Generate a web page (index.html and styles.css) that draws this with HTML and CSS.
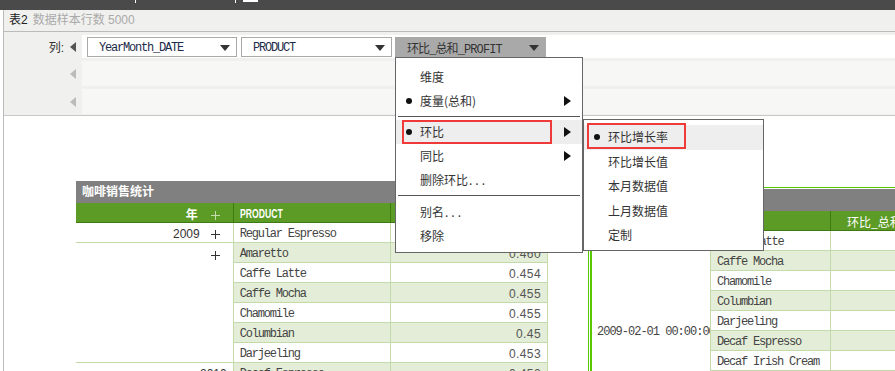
FILE: index.html
```html
<!DOCTYPE html>
<html>
<head>
    <link rel="stylesheet" href="styles.css">
</head>
<body>
    <div class="topbar">
        <span class="tab"></span>
        <span class="tab"></span>
        <span class="tab tab-on"></span>
    </div>
    <div class="panel">
        <div class="head">
            <span class="name">表2</span><span class="count">数据样本行数 5000</span>
        </div>
        <div class="toolbar">
            <div class="shelf">
                <div class="shelf-label"><span>列:</span><i class="arrow-left"></i></div>
                <div class="shelf-body shelf-fields">
                    <div class="field">YearMonth_DATE<i class="caret"></i></div>
                    <div class="field field-wide">PRODUCT<i class="caret"></i></div>
                    <div class="field field-wide field-open">环比_总和_PROFIT<i class="caret"></i></div>
                </div>
            </div>
            <div class="shelf">
                <div class="shelf-label"><i class="arrow-left arrow-dim"></i></div>
                <div class="shelf-body"></div>
            </div>
            <div class="shelf">
                <div class="shelf-label"><i class="arrow-left arrow-dim"></i></div>
                <div class="shelf-body"></div>
            </div>
        </div>
        <div class="canvas">
            <div class="report report-a">
                <div class="report-title">咖啡销售统计</div>
                <table class="grid">
                    <tr>
                        <th class="year">年<i class="plus plus-head"></i></th>
                        <th><span class="narrow">PRODUCT</span></th>
                        <th></th>
                    </tr>
                    <tr>
                        <td class="year">2009<i class="plus"></i></td>
                        <td class="prod">Regular Espresso</td>
                        <td class="val">0.452</td>
                    </tr>
                    <tr class="alt">
                        <td class="year year-top" rowspan="6"><i class="plus"></i></td>
                        <td class="prod">Amaretto</td>
                        <td class="val">0.460</td>
                    </tr>
                    <tr>
                        <td class="prod">Caffe Latte</td>
                        <td class="val">0.454</td>
                    </tr>
                    <tr class="alt">
                        <td class="prod">Caffe Mocha</td>
                        <td class="val">0.455</td>
                    </tr>
                    <tr>
                        <td class="prod">Chamomile</td>
                        <td class="val">0.455</td>
                    </tr>
                    <tr class="alt">
                        <td class="prod">Columbian</td>
                        <td class="val">0.45</td>
                    </tr>
                    <tr>
                        <td class="prod">Darjeeling</td>
                        <td class="val">0.453</td>
                    </tr>
                    <tr class="alt">
                        <td class="year year-plain">2010</td>
                        <td class="prod">Decaf Espresso</td>
                        <td class="val">0.452</td>
                    </tr>
                </table>
            </div>

            <div class="report report-b">
                <div class="report-title"></div>
                <table class="grid">
                    <tr>
                        <th></th>
                        <th><span class="narrow">PRODUCT</span></th>
                        <th class="metric">环比_总和_PROFIT</th>
                    </tr>
                    <tr>
                        <td class="stamp" rowspan="10">2009-02-01 00:00:00</td>
                        <td class="prod sel">Caffe Latte</td>
                        <td></td>
                    </tr>
                    <tr class="alt"><td class="prod sel">Caffe Mocha</td><td></td></tr>
                    <tr><td class="prod sel">Chamomile</td><td></td></tr>
                    <tr class="alt"><td class="prod sel">Columbian</td><td></td></tr>
                    <tr><td class="prod sel">Darjeeling</td><td></td></tr>
                    <tr class="alt"><td class="prod sel">Decaf Espresso</td><td></td></tr>
                    <tr><td class="prod sel">Decaf Irish Cream</td><td></td></tr>
                    <tr class="alt"><td class="prod sel">Earl Grey</td><td></td></tr>
                    <tr><td class="prod sel">Green Tea</td><td></td></tr>
                    <tr class="alt"><td class="prod sel">Lemon</td><td></td></tr>
                </table>
            </div>
        </div>
    </div>

    <div class="menu menu-main">
        <div class="menu-item">维度</div>
        <div class="menu-item checked has-sub">度量(总和)</div>
        <div class="menu-sep"></div>
        <div class="menu-item checked has-sub active">环比<span class="mark mark-main"></span></div>
        <div class="menu-item has-sub">同比</div>
        <div class="menu-item">删除环比<span class="dots">...</span></div>
        <div class="menu-sep menu-sep-low"></div>
        <div class="menu-item">别名<span class="dots">...</span></div>
        <div class="menu-item">移除</div>
    </div>

    <div class="menu menu-sub">
        <div class="menu-item checked active">环比增长率<span class="mark mark-sub"></span></div>
        <div class="menu-item">环比增长值</div>
        <div class="menu-item">本月数据值</div>
        <div class="menu-item">上月数据值</div>
        <div class="menu-item">定制</div>
    </div>
</body>
</html>
```

FILE: styles.css
```css
body {
    margin: 0;
    width: 895px;
    height: 371px;
    overflow: hidden;
    position: relative;
    background-color: #fff;
    font-family: "Liberation Sans", "Noto Sans CJK SC", sans-serif;
    font-size: 12px;
    color: #333;
}
.topbar {
    height: 10px;
    background-color: #4a4a4a;
    display: flex;
}
.tab {
    width: 99px;
    height: 3px;
    border-right: 1px solid #fff;
}
.tab:first-child {
    width: 135px;
}
.tab-on {
    width: 15px;
    margin-left: 7px;
    height: 2px;
    border: none;
    background-color: #fff;
}
.panel {
    margin-left: 3px;
    border-left: 1px solid #bbb;
    height: 361px;
}
.head {
    height: 21px;
    line-height: 21px;
    padding-left: 5px;
    background-color: #f0f0ee;
    border-bottom: 1px solid #bbb;
}
.head .name {
    color: #222;
}
.head .count {
    color: #aaa;
    margin-left: 5px;
}
.toolbar {
    background-color: #f0f0ee;
    padding: 3px 0 1px;
    border-bottom: 1px solid #c8c8c8;
}
.shelf {
    display: flex;
    height: 25px;
    margin-top: 3px;
}
.shelf:first-child {
    height: 23px;
    margin-top: 0;
}
.shelf-label {
    width: 78px;
    display: flex;
    align-items: center;
    justify-content: flex-end;
    padding-right: 6px;
    box-sizing: border-box;
    color: #333;
}
.shelf-label span {
    margin-right: 6px;
}
.arrow-left {
    width: 0;
    height: 0;
    border-top: 5px solid transparent;
    border-bottom: 5px solid transparent;
    border-right: 6px solid #555;
}
.arrow-dim {
    border-right-color: #bbb;
}
.shelf-body {
    flex: 1;
    background-color: #f7f7f5;
}
.shelf-fields {
    background-color: #fff;
    display: flex;
    padding: 2px 5px;
}
.field {
    width: 150px;
    height: 20px;
    box-sizing: border-box;
    border: 1px solid #a9a9a9;
    padding: 1px 6px 0 11px;
    display: flex;
    align-items: center;
    justify-content: space-between;
    font-family: "Liberation Mono", "Noto Sans CJK SC", monospace;
    font-size: 12px;
    letter-spacing: -1.2px;
    color: #1d2b4a;
}
.field-wide {
    width: 151px;
    margin-left: 4px;
}
.field-open {
    margin-left: 3px;
    background-color: #a9a9a9;
    color: #333;
    letter-spacing: -0.9px;
}
.caret {
    width: 0;
    height: 0;
    border-left: 5px solid transparent;
    border-right: 5px solid transparent;
    border-top: 6px solid #333;
}
.canvas {
    position: relative;
    height: 255px;
    overflow: hidden;
}
.report {
    position: absolute;
}
.report-a {
    left: 72px;
    top: 65px;
    width: 472px;
}
.report-b {
    left: 586px;
    top: 71px;
    width: 480px;
    border-top: 1px solid #5ac800;
    border-left: 2px solid #5ac800;
    padding-top: 1px;
}
.report-b::before {
    content: "";
    position: absolute;
    left: -4px;
    top: 24px;
    bottom: 0;
    width: 1px;
    background-color: #5ac800;
}
.report-title {
    height: 22px;
    line-height: 22px;
    padding-left: 6px;
    background-color: #808080;
    color: #fff;
    font-weight: bold;
}
.grid {
    width: 100%;
    border-collapse: collapse;
    table-layout: fixed;
}
.grid th, .grid td {
    height: 17px;
    padding: 2px 6px 0;
    border: 1px solid #c3dbab;
    white-space: nowrap;
    overflow: hidden;
    text-align: left;
}
.grid th {
    background-color: #5b9b26;
    border-color: #3d7a12;
    color: #fff;
    font-weight: bold;
}
.narrow {
    display: inline-block;
    transform: scaleX(0.72);
    transform-origin: left center;
}
.grid tr:first-child th {
    border-top: none;
}
.grid td:first-child, .grid th:first-child {
    border-left: none;
}
.grid .year {
    text-align: right;
    padding-right: 13px;
}
.grid .year-top {
    vertical-align: top;
    padding-top: 5px;
}
.grid .year-plain {
    padding-right: 6px;
    background-color: #fff;
}
.plus {
    display: inline-block;
    width: 9px;
    height: 9px;
    margin-left: 11px;
    vertical-align: -1px;
    background:
        linear-gradient(#333, #333) center / 9px 1px no-repeat,
        linear-gradient(#333, #333) center / 1px 9px no-repeat;
}
.plus-head {
    margin-left: 13px;
    background:
        linear-gradient(#c5dcae, #c5dcae) center / 9px 1px no-repeat,
        linear-gradient(#c5dcae, #c5dcae) center / 1px 9px no-repeat;
}
.grid .prod {
    font-family: "Liberation Mono", monospace;
    font-size: 12px;
    letter-spacing: -1.2px;
    color: #444;
}
.grid .val {
    text-align: right;
    color: #555;
    letter-spacing: 0.4px;
}
.grid tr.alt .prod, .grid tr.alt .val, .grid tr.alt td:last-child {
    background-color: #e4edd7;
}
.grid .stamp {
    padding-left: 5px;
    font-family: "Liberation Mono", monospace;
    font-size: 12px;
    letter-spacing: -1px;
    color: #444;
    text-overflow: clip;
}
.grid .sel {
    border-left: 2px solid #5ac800;
}
.grid .metric {
    padding-left: 16px;
    font-family: "Noto Sans CJK SC", sans-serif;
    font-weight: normal;
}
.report-b .grid th:nth-child(1) {
    width: 106px;
}
.report-b .grid th:nth-child(2) {
    width: 107px;
}
.report-b .grid th:nth-child(3) {
    width: 220px;
}
.menu {
    position: absolute;
    box-sizing: border-box;
    background-color: #fff;
    border: 1px solid #666;
    font-family: "Noto Sans CJK SC", sans-serif;
    font-size: 12px;
    color: #333;
}
.menu-main {
    left: 395px;
    top: 57px;
    width: 188px;
    height: 196px;
    padding-top: 7px;
}
.menu-sub {
    left: 583px;
    top: 119px;
    width: 181px;
    height: 132px;
    padding-top: 5px;
}
.menu-sub .menu-item {
    height: 24.5px;
    line-height: 24px;
}
.menu-item {
    position: relative;
    height: 24px;
    line-height: 24px;
    padding-left: 24px;
}
.menu-item.active {
    background-color: #eee;
}
.menu-item.checked::before {
    content: "";
    position: absolute;
    left: 10px;
    top: 9px;
    width: 6px;
    height: 6px;
    border-radius: 50%;
    background-color: #111;
}
.menu-item.has-sub::after {
    content: "";
    position: absolute;
    right: 11px;
    top: 7px;
    width: 0;
    height: 0;
    border-top: 5px solid transparent;
    border-bottom: 5px solid transparent;
    border-left: 7px solid #111;
}
.dots {
    letter-spacing: 3px;
    margin-left: 1px;
}
.menu-sep {
    height: 1px;
    margin: 3px 2px;
    background-color: #555;
}
.menu-sep-low {
    margin-bottom: 4px;
}
.mark {
    position: absolute;
    box-sizing: border-box;
    border: 2px solid #f03a3a;
}
.mark-main {
    left: 6px;
    top: 0;
    width: 150px;
    height: 24px;
}
.mark-sub {
    left: 3px;
    top: -2px;
    width: 99px;
    height: 26px;
}
```
